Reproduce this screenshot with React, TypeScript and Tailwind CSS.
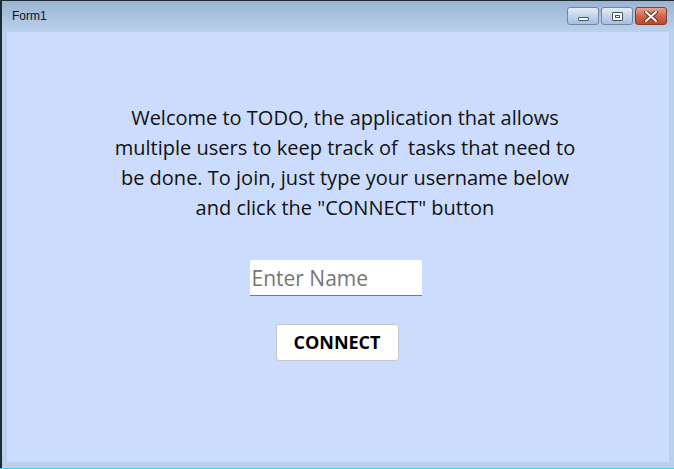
import React from "react";

const TitleButton = ({ kind }: { kind: "min" | "max" | "close" }) => {
  const isClose = kind === "close";
  return (
    <div
      className={
        "flex h-[18px] items-center justify-center rounded-[3px] border " +
        (isClose
          ? "w-[32px] border-[#8a3b2c] bg-gradient-to-b from-[#e8a493] via-[#d0654c] to-[#c2452c]"
          : "w-[32px] border-[#6f86a5] bg-gradient-to-b from-[#e4edf7] via-[#c3d4e8] to-[#a9c0dc]")
      }
    >
      {kind === "min" && (
        <div className="mt-[5px] h-[4px] w-[11px] rounded-[1px] border border-[#44556b] bg-white" />
      )}
      {kind === "max" && (
        <div className="flex h-[9px] w-[11px] items-center justify-center rounded-[1px] border border-[#44556b] bg-white">
          <div className="h-[3px] w-[5px] border border-[#44556b]" />
        </div>
      )}
      {isClose && (
        <svg width="14" height="11" viewBox="0 0 14 11">
          <path
            d="M2 1 L12 10 M12 1 L2 10"
            stroke="#5a2a20"
            strokeWidth="4"
            strokeLinecap="round"
          />
          <path
            d="M2 1 L12 10 M12 1 L2 10"
            stroke="#ffffff"
            strokeWidth="2.2"
            strokeLinecap="round"
          />
        </svg>
      )}
    </div>
  );
};

export default function App() {
  return (
    <div className="h-[469px] w-[674px] overflow-hidden bg-white font-['Open_Sans',sans-serif]">
      <div className="flex h-[468px] flex-col border-l-2 border-t border-[#1e2a36] bg-[#b9d1ea]">
        {/* Title bar */}
        <div className="flex h-[30px] items-center justify-between bg-gradient-to-b from-[#9ab4d2] to-[#b9d1ea] pl-[10px] pr-[7px]">
          <span className="font-['Liberation_Sans',sans-serif] text-[12px] text-[#10101e]">Form1</span>
          <div className="flex gap-[2px]">
            <TitleButton kind="min" />
            <TitleButton kind="max" />
            <TitleButton kind="close" />
          </div>
        </div>

        {/* Client area */}
        <div className="mx-[5px] mb-[6px] mt-[1px] flex flex-1 flex-col items-center bg-[#ccdcff] pl-[8px]">
          <p className="mt-[71px] w-[470px] pl-[6px] text-center text-[20px] leading-[30px] text-[#111]">
            Welcome to TODO, the application that allows multiple users to keep track of&nbsp; tasks that need to be done. To join, just type your username below and click the "CONNECT" button
          </p>
          <input
            placeholder="Enter Name"
            className="mr-[13px] mt-[37px] h-[36px] w-[172px] border-b border-[#7a7a7a] bg-white px-[2px] text-[21px] text-[#222] outline-none placeholder:text-[#767676]"
          />
          <button className="mr-[10px] mt-[28px] h-[37px] w-[123px] rounded-[3px] border border-[#c8c8c8] bg-white text-[18px] font-bold text-black">
            CONNECT
          </button>
        </div>
      </div>
      <div className="h-[1px] bg-[#38d4ea]" />
    </div>
  );
}
